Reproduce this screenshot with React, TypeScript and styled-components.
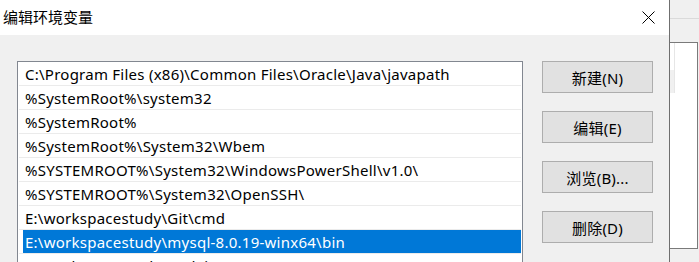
import styled, { createGlobalStyle } from "styled-components";

const GlobalStyle = createGlobalStyle`
  html, body {
    margin: 0;
    padding: 0;
    background: #f0f0f0;
  }
  body {
    font-family: "Noto Sans", "Noto Sans CJK SC", sans-serif;
  }
`;

const paths = [
  "C:\\Program Files (x86)\\Common Files\\Oracle\\Java\\javapath",
  "%SystemRoot%\\system32",
  "%SystemRoot%",
  "%SystemRoot%\\System32\\Wbem",
  "%SYSTEMROOT%\\System32\\WindowsPowerShell\\v1.0\\",
  "%SYSTEMROOT%\\System32\\OpenSSH\\",
  "E:\\workspacestudy\\Git\\cmd",
  "E:\\workspacestudy\\mysql-8.0.19-winx64\\bin",
  "E:\\workspacestudy\\nodejs\\",
];

const buttons = ["新建(N)", "编辑(E)", "浏览(B)...", "删除(D)"];

const App = () => {
  return (
    <Screen>
      <GlobalStyle />
      <Dialog>
        <TitleBar>
          <Title>编辑环境变量</Title>
          <CloseButton aria-label="close">
            <svg width="13" height="13" viewBox="0 0 13 13">
              <path d="M0.5 0.5 L12.5 12.5 M12.5 0.5 L0.5 12.5" stroke="#000" strokeWidth="1" fill="none" />
            </svg>
          </CloseButton>
        </TitleBar>
        <Body>
          <PathList>
            {paths.map((p, i) => (
              <PathRow key={p} selected={i === 7}>
                <PathText selected={i === 7}>{p}</PathText>
              </PathRow>
            ))}
          </PathList>
          <ButtonColumn>
            {buttons.map((b) => (
              <ActionButton key={b}>{b}</ActionButton>
            ))}
          </ButtonColumn>
        </Body>
      </Dialog>
      <BehindWindow>
        <BehindHeader />
        <BehindPanel>
          <BehindScroll />
        </BehindPanel>
      </BehindWindow>
    </Screen>
  );
};

const Screen = styled.div`
  display: flex;
  width: 699px;
  height: 262px;
  overflow: hidden;
  background: #f0f0f0;
`;

const Dialog = styled.div`
  width: 669px;
  flex: none;
  display: flex;
  flex-direction: column;
  border-right: 1px solid #6f6f6f;
  background: #f0f0f0;
`;

const TitleBar = styled.div`
  height: 35px;
  flex: none;
  background: #ffffff;
  display: flex;
  align-items: center;
  justify-content: space-between;
  padding: 0 14px 0 3px;
`;

const Title = styled.div`
  font-family: "Noto Sans CJK SC", sans-serif;
  font-size: 15px;
  color: #000;
  line-height: 1;
  margin-top: -2px;
`;

const CloseButton = styled.div`
  width: 13px;
  height: 13px;
  display: flex;
  margin-top: -1px;
`;

const Body = styled.div`
  display: flex;
  align-items: flex-start;
  padding: 26px 0 0 17px;
  gap: 19px;
`;

const PathList = styled.div`
  width: 502px;
  height: 220px;
  flex: none;
  background: #ffffff;
  border: 1px solid #828790;
  border-bottom: none;
  padding: 0 1px 0 1px;
  display: flex;
  flex-direction: column;
`;

const PathRow = styled.div<{ selected: boolean }>`
  height: 23px;
  flex: none;
  border-bottom: 1px solid #ebebeb;
  padding-left: ${({ selected }) => (selected ? "4px" : "0")};
  display: flex;
`;

const PathText = styled.div<{ selected: boolean }>`
  flex: 1;
  display: flex;
  align-items: center;
  padding-left: ${({ selected }) => (selected ? "2px" : "6px")};
  background: ${({ selected }) => (selected ? "#0078d7" : "transparent")};
  color: ${({ selected }) => (selected ? "#ffffff" : "#000000")};
  font-size: 15px;
  letter-spacing: 0.25px;
  white-space: nowrap;
  padding-top: 1px;
`;

const ButtonColumn = styled.div`
  display: flex;
  flex-direction: column;
  gap: 18px;
`;

const ActionButton = styled.div`
  width: 109px;
  height: 30px;
  border: 1px solid #adadad;
  background: #e1e1e1;
  display: flex;
  align-items: center;
  justify-content: center;
  font-size: 15px;
  letter-spacing: 0.2px;
  color: #000;
`;

const BehindWindow = styled.div`
  flex: 1;
  display: flex;
  flex-direction: column;
  background: #f0f0f0;
`;

const BehindHeader = styled.div`
  height: 18px;
  border-bottom: 1px solid #dadada;
  flex: none;
`;

const BehindPanel = styled.div`
  margin-top: 23px;
  height: 205px;
  width: 27px;
  background: #ffffff;
  border: 1px solid #7a7a7a;
  border-left: none;
  display: flex;
`;

const BehindScroll = styled.div`
  width: 4px;
  height: 50px;
  background: linear-gradient(#ffffff 0 27px, #f0f0f0 27px);
  border-right: 1px solid #e6e6e6;
`;

export default App;
